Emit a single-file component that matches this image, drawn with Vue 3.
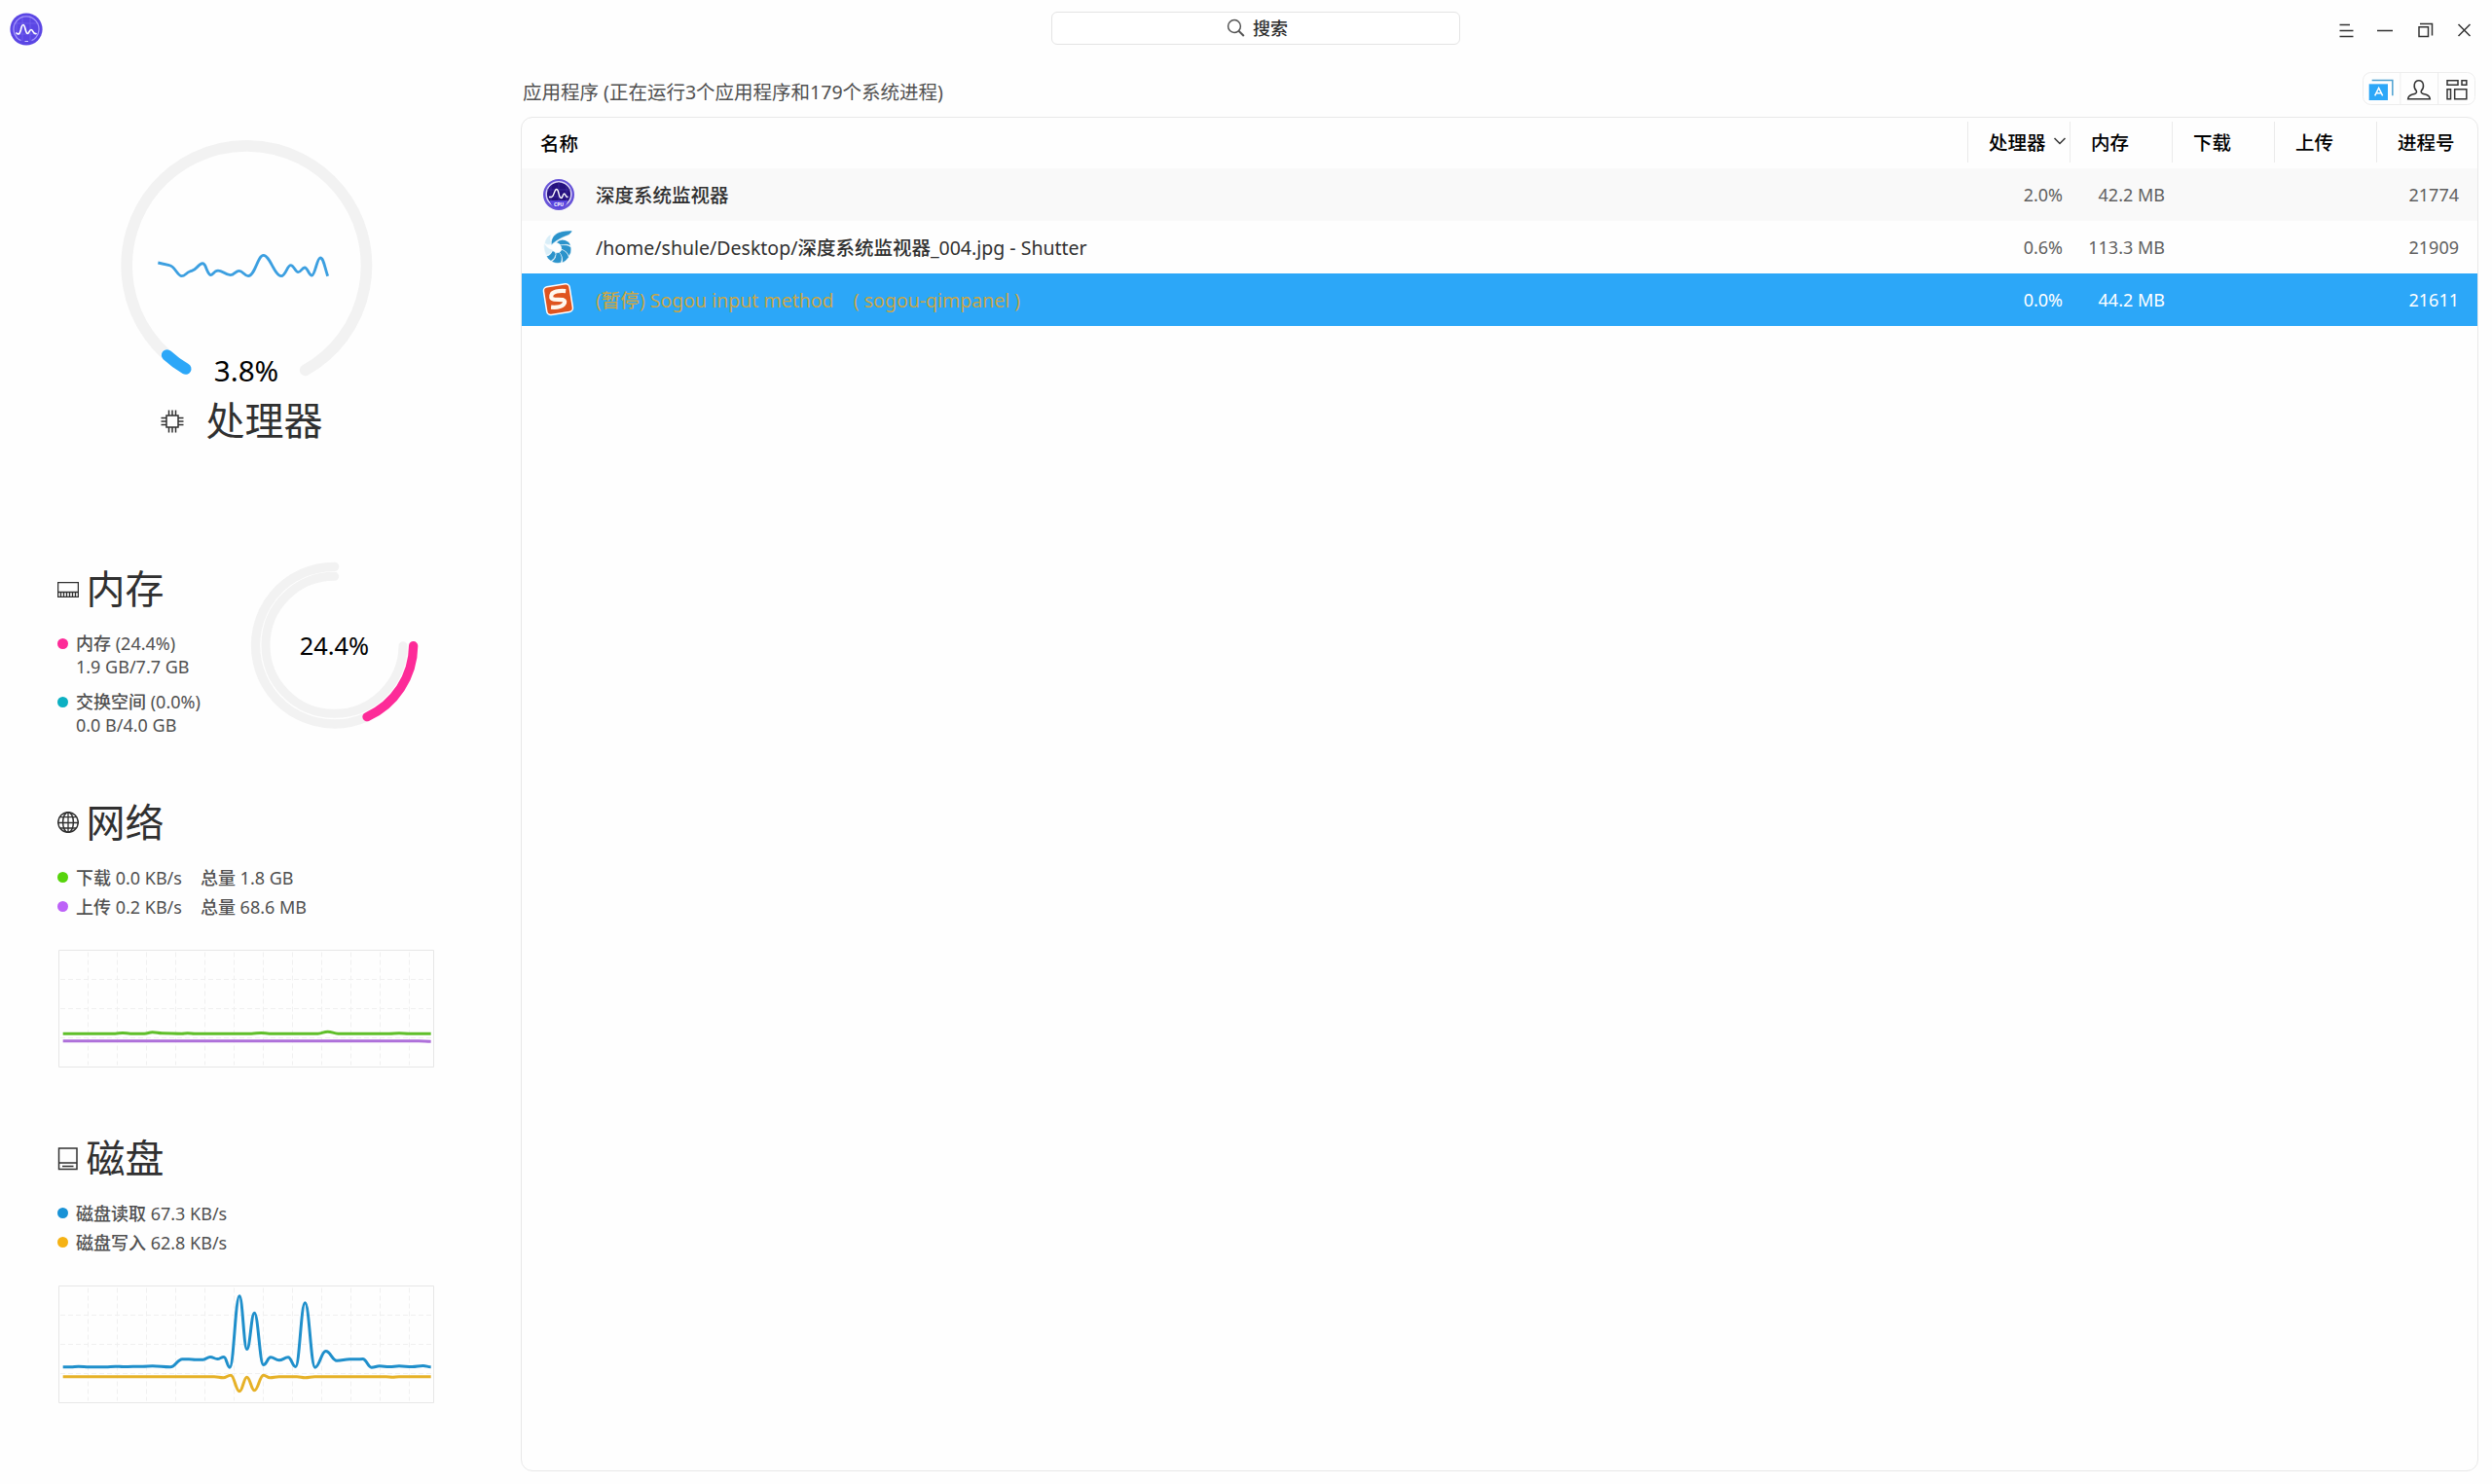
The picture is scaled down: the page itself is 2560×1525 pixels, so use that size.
<script setup>
import { h } from 'vue'

// Chinese runs are set in the medium weight, Latin runs in the regular one.
const MixedText = ({ text }) => h('span', { style: { whiteSpace: 'pre' } },
  text.split(/([\u4e00-\u9fff]+)/).filter(Boolean).map((part) =>
    /[\u4e00-\u9fff]/.test(part) ? h('b', { style: { fontWeight: 500 } }, part) : part))
MixedText.props = ['text']

const curve = (pts) => {
  let d = `M${pts[0][0]} ${pts[0][1]}`
  for (let i = 1; i < pts.length; i++) {
    const [x0, y0] = pts[i - 1]
    const [x1, y1] = pts[i]
    const k = (x1 - x0) * 0.42
    d += `C${x0 + k} ${y0} ${x1 - k} ${y1} ${x1} ${y1}`
  }
  return d
}

const cpuLine = 'M187 450L222 458C240 461 246 491 260 491C270 491 274 481 285 477C296 473 298 474 306 465C330 438 332 460 338 473C350 500 354 483 365 476C380 467 392 488 410 488C422 488 426 475 437 475C448 475 454 491 465 491C486 491 494 427 512 427C532 427 546 491 567 491C580 491 585 458 596 458C606 458 610 479 619 479C627 479 631 465 639 465C648 465 652 489 661 489C671 489 677 435 687 435C697 435 700 462 710 491'

const downLine = curve([[74, 257], [235, 257], [258, 255], [282, 257], [325, 257], [350, 253], [380, 256], [440, 257], [458, 256], [480, 257], [655, 257], [685, 255], [710, 257], [860, 257], [890, 251], [922, 257], [1080, 257], [1110, 256], [1140, 257], [1208, 257]])
const upLine = curve([[74, 280], [1170, 280], [1208, 281]])
const readLine = curve([[74, 250], [98, 250], [122, 248], [155, 250], [205, 250], [236, 248], [260, 249], [320, 248], [350, 247], [405, 250], [442, 226], [462, 226], [482, 227], [506, 227], [528, 219], [550, 225], [570, 219], [588, 251], [618, 31], [641, 195], [664, 83], [692, 243], [714, 220], [740, 229], [768, 220], [791, 249], [820, 52], [851, 251], [884, 201], [918, 230], [958, 226], [980, 226], [998, 225], [1025, 251], [1050, 247], [1080, 249], [1110, 247], [1150, 249], [1184, 246], [1208, 250]])
const writeLine = curve([[74, 280], [540, 280], [568, 283], [591, 275], [618, 325], [641, 281], [664, 322], [692, 275], [712, 283], [740, 280], [795, 280], [820, 283], [850, 280], [1070, 280], [1090, 281], [1110, 280], [1208, 280]])

const charts = {
  net: [{ color: '#5fbf2a', d: downLine }, { color: '#ae70da', d: upLine }],
  disk: [{ color: '#1f8fcb', d: readLine }, { color: '#e6b127', d: writeLine }],
}
const net = [
  { color: '#57d40c', name: '下载', rate: '0.0 KB/s', total: '1.8 GB' },
  { color: '#bd62f8', name: '上传', rate: '0.2 KB/s', total: '68.6 MB' },
]
const disk = [
  { color: '#1892d6', name: '磁盘读取', rate: '67.3 KB/s' },
  { color: '#f5b214', name: '磁盘写入', rate: '62.8 KB/s' },
]
const columns = ['处理器', '内存', '下载', '上传', '进程号']
const rows = [
  { icon: 'monitor', name: '深度系统监视器', cpu: '2.0%', mem: '42.2 MB', pid: '21774' },
  { icon: 'shutter', name: '/home/shule/Desktop/深度系统监视器_004.jpg - Shutter', cpu: '0.6%', mem: '113.3 MB', pid: '21909' },
  { icon: 'sogou', name: '(暂停) Sogou input method    ( sogou-qimpanel )', cpu: '0.0%', mem: '44.2 MB', pid: '21611', selected: true },
]
</script>

<template>
  <div class="window">
    <header class="titlebar">
      <svg class="logo" viewBox="0 0 36 36">
        <circle cx="18" cy="18" r="16.6" fill="#5b46e4" />
        <path d="M8 8V28M14 4V30M22 4V30M5 12H31M5 23H31" stroke="#7767ef" stroke-width=".7" />
        <path d="M12.5 29.7A13 13 0 1 1 23.5 29.7" fill="none" stroke="#a394fb" stroke-width="1.3" />
        <path d="M8 22C10 24 11.300 23 12.300 19C13 15 13.600 13.500 15 13.500C17 13.500 17 22.500 19.300 22.500C21 22.500 21 18.500 23 18.500C25 18.500 24.500 23 28 22.500" fill="none" stroke="#fff" stroke-width="1.7" stroke-linecap="round" />
        <path d="M16.500 30.500H20" stroke="#cfc7ff" stroke-width="1" />
      </svg>
      <div class="search">
        <svg width="20" height="20" viewBox="0 0 20 20" fill="none" stroke="#555"><circle cx="8" cy="8" r="6.400" stroke-width="1.500" /><path d="M12.500 12.800L17.800 18" stroke-width="2" /></svg>
        <span>搜索</span>
      </div>
      <svg class="controls" width="140" height="18" viewBox="0 0 140 18" fill="none" stroke="#333" stroke-width="1.500">
        <path d="M3.500 3.500H14M3.500 9.500H17.500M3.500 15.500H17.500M42 9.500H58" />
        <path d="M85 5.800H94.500V15.500H85ZM86 2.500H98.500V14.500" />
        <path d="M125.500 3L137.500 15M137.500 3L125.500 15" />
      </svg>
    </header>

    <div class="body">
      <aside class="sidebar">
        <section class="cpu">
          <svg class="cpu-gauge" width="300" height="283" viewBox="0 0 900 849" fill="none" stroke-linecap="round">
            <path d="M272 777A369.500 369.500 0 1 1 641 781" stroke="#f2f2f2" stroke-width="35" />
            <path d="M215 735Q241 759 272 777" stroke="#fff" stroke-width="37" />
            <path d="M215 735Q241 759 272 777" stroke="#2ca7f8" stroke-width="35" />
            <path :d="cpuLine" stroke="#3c9fe0" stroke-width="8.500" stroke-linecap="butt" />
            <text x="459" y="815" class="gauge-text cpu-text">3.8%</text>
          </svg>
          <h2 class="cpu-title">
            <svg width="24" height="24" viewBox="0 0 24 24" fill="none" stroke="#303030" stroke-width="1.500">
              <path d="M6 6H18V18H6Z" /><path d="M8.500 .500V6M12 .500V6M15.500 .500V6M8.500 18V23.500M12 18V23.500M15.500 18V23.500M.500 8.500H6M.500 12H6M.500 15.500H6M18 8.500H23.500M18 12H23.500M18 15.500H23.500" />
            </svg>
            <span>处理器</span>
          </h2>
        </section>

        <section class="memory">
          <div class="memory-info">
            <h2>
              <svg width="22" height="24" viewBox="0 0 22 24" fill="none" stroke="#303030" stroke-width="1.300"><path d="M.600 4.600H21.400V19.400H.600ZM.600 14.500H21.400M3.500 14.500V19M6.500 14.500V19M9.500 14.500V19M12.500 14.500V19M15.500 14.500V19M18.500 14.500V19" /></svg>
              <span>内存</span>
            </h2>
            <dl>
              <dt><i class="dot pink"></i><MixedText class="label" text="内存 (24.4%)" /></dt>
              <dd>1.9 GB/7.7 GB</dd>
              <dt><i class="dot teal"></i><MixedText class="label" text="交换空间 (0.0%)" /></dt>
              <dd>0.0 B/4.0 GB</dd>
            </dl>
          </div>
          <svg width="178" height="178" viewBox="645 48 534 534" fill="none" stroke-linecap="round">
            <path d="M911 67A242.500 242.500 0 1 0 1011 530" stroke="#f2f2f2" stroke-width="28" />
            <path d="M911 97A211.500 211.500 0 1 0 1122 311" stroke="#f2f2f2" stroke-width="27" />
            <path d="M1154 311A243 243 0 0 1 1011 530" stroke="#fd2b98" stroke-width="28" />
            <text x="910" y="338" class="gauge-text mem-text">24.4%</text>
          </svg>
        </section>

        <section class="metric">
          <h2>
            <svg width="22" height="24" viewBox="0 0 22 24" fill="none" stroke="#303030" stroke-width="1.500"><circle cx="11" cy="11" r="10.300" /><ellipse cx="11" cy="11" rx="5.400" ry="10.300" /><path d="M11 .600V21.400M.600 11.500H21.400M2.500 5.600H19.500M2.500 17H19.500" stroke-width="1.300" /></svg>
            <span>网络</span>
          </h2>
          <ul>
            <li v-for="n in net" :key="n.name"><i class="dot" :style="{ background: n.color }"></i><MixedText class="label rate" :text="n.name + ' ' + n.rate" /><MixedText class="label" :text="'总量 ' + n.total" /></li>
          </ul>
          <svg class="chart" width="386" height="121" viewBox="60 -1.500 1158 363" fill="none">
            <g class="grid"><path v-for="i in 12" :key="i" :d="`M${61.500 + i * 90} 6V354`" /><path v-for="i in 3" :key="'h' + i" :d="`M66 ${i * 90}H1214`" /></g>
            <path class="frame" d="M61.500 0H1216.500V360H61.500Z" />
            <path v-for="s in charts.net" :key="s.color" :d="s.d" :stroke="s.color" stroke-width="9" />
          </svg>
        </section>

        <section class="metric">
          <h2>
            <svg width="22" height="24" viewBox="0 0 22 24" fill="none" stroke="#303030" stroke-width="1.500"><path d="M1.500 1H20V22.500H1.500ZM1.500 16H20M5 19.500H16.500" /></svg>
            <span>磁盘</span>
          </h2>
          <ul>
            <li v-for="n in disk" :key="n.name"><i class="dot" :style="{ background: n.color }"></i><MixedText class="label" :text="n.name + ' ' + n.rate" /></li>
          </ul>
          <svg class="chart" width="386" height="121" viewBox="60 -1.500 1158 363" fill="none">
            <g class="grid"><path v-for="i in 12" :key="i" :d="`M${61.500 + i * 90} 6V354`" /><path v-for="i in 3" :key="'h' + i" :d="`M66 ${i * 90}H1214`" /></g>
            <path class="frame" d="M61.500 0H1216.500V360H61.500Z" />
            <path v-for="s in charts.disk" :key="s.color" :d="s.d" :stroke="s.color" stroke-width="9" />
          </svg>
        </section>
      </aside>

      <main class="main">
        <div class="toolbar">
          <span class="summary">应用程序 (正在运行3个应用程序和179个系统进程)</span>
          <svg class="tabs" width="116" height="34" viewBox="143 221 348 102" fill="none">
            <rect x="144.500" y="222.500" width="345" height="99" rx="24" stroke="#ededed" stroke-width="3" />
            <path d="M259.500 223V321M376 223V321" stroke="#ededed" stroke-width="3" />
            <path d="M163 258H221V308H163Z" fill="#2ca7f8" />
            <path d="M172 246.500H235.500V294" stroke="#4a9fd0" stroke-width="4.500" />
            <path d="M181 294L193 270L205 294M185.500 286H200.500" stroke="#fff" stroke-width="4.500" />
            <path d="M309 279C299 270 300 247 316.500 247C333 247 334 270 324 279C321 286 329 288 337 290C347 293 350 296 351 304.500H283C284 296 287 293 297 290C305 288 312 286 309 279Z" stroke="#333" stroke-width="4.500" />
            <path d="M404 247H437V260.500H404ZM449 247H463.500V260.500H449ZM404 274H414.500V304.500H404ZM427 274H463.500V304.500H427Z" stroke="#333" stroke-width="4.500" />
          </svg>
        </div>

        <div class="table">
          <div class="row head">
            <div class="name"><b>名称</b></div>
            <div v-for="(c, i) in columns" :key="c" class="cell"><span>{{ c }}</span>
              <svg v-if="i === 0" width="14" height="10" viewBox="0 0 14 10" fill="none" stroke="#333" stroke-width="1.500"><path d="M1.500 2L7 7.500L12.500 2" /></svg>
            </div>
          </div>
          <div v-for="r in rows" :key="r.pid" class="row" :class="{ selected: r.selected }">
            <div class="name">
              <svg v-if="r.icon === 'monitor'" width="36" height="36" viewBox="0 0 36 36" fill="none">
                <circle cx="18" cy="18" r="16" fill="#6753d8" />
                <circle cx="18" cy="17.500" r="12.800" fill="#26117f" stroke="#dcd6f8" stroke-width="1.500" />
                <path d="M10 9V25M18 5V25M26 9V25M6 13H30M6 20H30" stroke="#4632a7" stroke-width=".700" />
                <path d="M8.500 24H27.500Q25 32.500 18 32.500Q11 32.500 8.500 24Z" fill="#5945de" />
                <path d="M8 20.500H10.500C13 20.500 13.500 12.500 15.700 12.500C18.500 12.500 17.500 21.500 20.500 21.500C22.300 21.500 22 17 23.700 17C25 17 24.500 20.500 27.500 20.500" stroke="#fff" stroke-width="1.400" />
                <text x="18" y="29.500" class="cpu-badge">CPU</text>
              </svg>
              <svg v-else-if="r.icon === 'shutter'" width="36" height="36" viewBox="10 12 108 108">
                <g fill="#d9eef8" stroke="#fff" stroke-width="1.500">
                  <path d="M40 26Q24 34 20 54Q30 62 42 56Q36 42 40 26Z" />
                  <path d="M19 55Q16 74 25 92Q42 88 47 74Q30 72 19 55Z" />
                </g>
                <g fill="#2b93cb" stroke="#fff" stroke-width="1.800">
                  <path d="M41 60C38 28 62 13 106 15C100 31 84 31 72 38C59 45 49 51 41 60Z" />
                  <path d="M56 52Q74 34 95 50Q99 54 101 62Q88 55 70 60Q64 54 56 52Z" />
                  <path d="M68 60Q90 56 102 66Q105 82 96 94Q88 78 72 73Q73 65 68 60Z" />
                  <path d="M73 73Q92 80 95 97Q84 113 74 114Q78 95 64 83Q71 79 73 73Z" />
                  <path d="M66 82Q78 96 71 114Q53 118 42 110Q57 101 54 84Z" />
                  <path d="M45 77Q55 79 55 88Q54 101 40 109Q30 104 26 94Q39 91 45 77Z" />
                </g>
              </svg>
              <svg v-else width="36" height="36" viewBox="0 0 36 36">
                <g transform="rotate(-9 18 18)"><rect x="4" y="3" width="27" height="29" rx="4" fill="#df541f" stroke="#fff" stroke-width="1.500" />
                <path d="M26.500 10.300Q17 8 12.500 10.500Q8.500 15 13.500 17L22 18.700Q25.500 20.500 22 23.700Q18 26.500 9 24.300" fill="none" stroke="#fff8ef" stroke-width="4.300" /></g>
              </svg>
              <MixedText class="label" :text="r.name" />
            </div>
            <div class="cell">{{ r.cpu }}</div>
            <div class="cell">{{ r.mem }}</div>
            <div class="cell"></div>
            <div class="cell"></div>
            <div class="cell">{{ r.pid }}</div>
          </div>
        </div>
      </main>
    </div>
  </div>
</template>

<style>
body { background: #fefefe; }
</style>

<style scoped>
* { box-sizing: border-box; }
.window { width: 2560px; height: 1525px; overflow: hidden; background: #fefefe; font-family: "Noto Sans", "Noto Sans CJK SC", sans-serif; font-size: 18px; color: #505050; }
h2, dl, dd, ul { margin: 0; padding: 0; }
.titlebar { height: 60px; display: grid; grid-template-columns: 1080px 420px 1fr; align-items: center; }
.logo { width: 36px; height: 36px; margin-left: 9px; }
.search { height: 34px; margin-bottom: 2px; border: 1px solid #e4e4e4; border-radius: 6px; background: #fff; display: flex; align-items: center; padding-left: 179px; gap: 7px; font-weight: 500; color: #303030; }
.search span { margin-bottom: 2px; }
.controls { justify-self: end; margin: 1px 20px 0 0; }
.body { display: flex; }
.sidebar { width: 535px; padding: 60px 0 0 59px; }
h2 { height: 60px; display: flex; align-items: center; gap: 8px; font-size: 40px; line-height: 60px; font-weight: 400; color: #303030; }
h2 span { margin: -1px 0 1px -0.500px; }
.cpu { margin-left: 41px; width: 300px; }
.cpu-gauge { display: block; }
.cpu-title { padding-left: 64.500px; gap: 23.500px; }
.gauge-text { text-anchor: middle; fill: #000; }
.cpu-text { font-size: 89px; }
.mem-text { font-size: 76px; }
.memory { margin-top: 113px; height: 182px; display: flex; }
.memory-info { width: 196px; white-space: nowrap; }
dl { padding: 13px 0 0 19px; line-height: 24px; }
dt { height: 24px; margin-left: -19px; display: flex; align-items: center; }
dd { height: 36px; }
.dot { width: 11px; height: 11px; margin-right: 8px; border-radius: 50%; flex: none; }
.pink { background: #fd2b98; }
.teal { background: #0cb0c2; }
.label { margin-bottom: 1px; }
.metric { height: 345px; }
.metric:nth-of-type(3) { margin-top: 58px; }
ul { list-style: none; padding-top: 13px; height: 100px; }
li { height: 24px; margin-bottom: 6px; display: flex; align-items: center; white-space: pre; }
.rate { margin-right: 19px; }
.chart { display: block; margin-left: 1px; }
.grid path { stroke: #f0f0f0; stroke-width: 3; stroke-dasharray: 15 9; }
.frame { stroke: #e7e7e7; stroke-width: 3; }
.main { width: 2011px; }
.toolbar { height: 60px; padding: 14px 3px 0 2px; display: flex; justify-content: space-between; align-items: flex-start; }
.summary { font-size: 19.500px; line-height: 40px; padding-top: 1px; }
.table { height: 1392px; border: 1px solid #e8e8e8; border-radius: 12px; overflow: hidden; }
.row { height: 54px; display: flex; align-items: center; }
.row .name { flex: 1; padding-left: 20px; display: flex; align-items: center; gap: 20px; font-size: 19.500px; color: #303030; white-space: pre; }
.row .cell { width: 105px; padding: 0 6px 1px 0; text-align: right; color: #606060; }
.row .cell:last-child { padding-right: 19px; }
.row:nth-child(2) { background: #f9f9f9; }
.row.head { height: 52px; align-items: flex-start; padding-top: 3px; }
.head .name { height: 44px; color: #000; padding-left: 19px; }
.head .name b { font-weight: 500; }
.head .cell { height: 42px; margin-top: 1px; border-left: 1px solid #eaeaea; padding: 0 0 2px 21px; display: flex; align-items: center; gap: 7px; font-size: 19.500px; font-weight: 500; color: #000; white-space: nowrap; position: relative; left: 1px; }
.head .cell:last-child { padding-right: 0; }
.row.selected { background: #2ca7f8; }
.selected .cell { color: #fff; }
.selected .name { color: #c9a648; }
.cpu-badge { font-size: 5px; font-weight: 700; fill: #fff; text-anchor: middle; }
</style>
